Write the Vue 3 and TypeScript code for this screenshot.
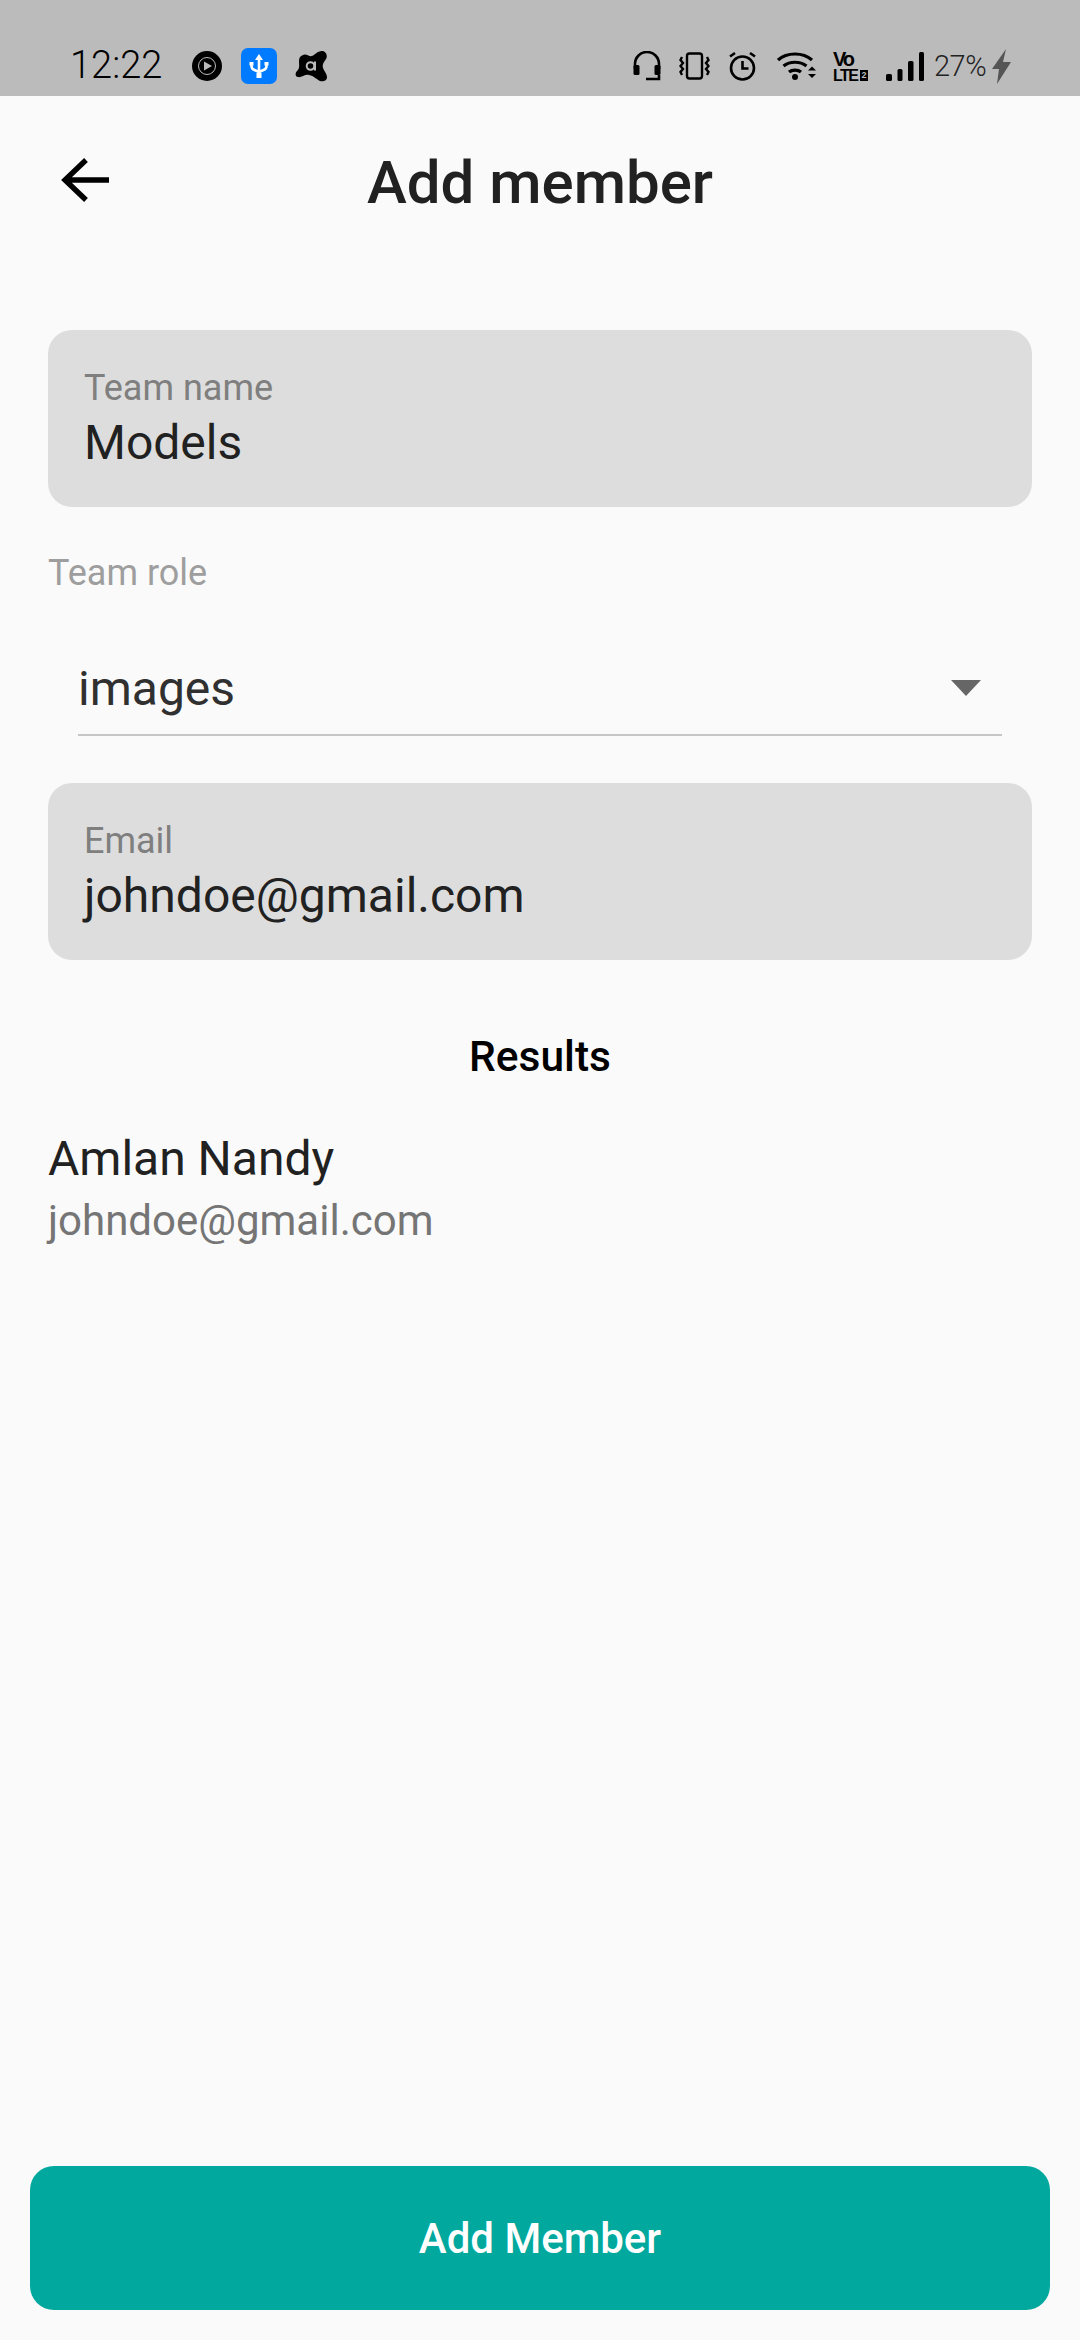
<script setup lang="ts">
const member = { name: 'Amlan Nandy', email: 'johndoe@gmail.com' }
</script>

<template>
  <div class="screen">
    <div class="status">
      <span class="time">12:22</span>
      <div class="left-icons">
        <svg width="30" height="30" viewBox="0 0 30 30">
          <circle cx="15" cy="15" r="15" fill="#000" />
          <circle cx="15" cy="15" r="8.500" fill="none" stroke="#bbb" stroke-width="1" />
          <path d="M12 10.500 L20 15 L12 19.500Z" fill="#bbb" />
        </svg>
        <svg width="36" height="36" viewBox="0 0 36 36">
          <rect width="36" height="36" rx="7" fill="#007aff" />
          <path d="M18 6l-4 6h8z" fill="#fff" />
          <rect x="15.500" y="25" width="5" height="5" fill="#fff" />
          <path d="M18 10v17M10.500 16v2q0 3 3 4l4.500 2M25.500 16v2q0 3-3 4l-4.500 2" fill="none" stroke="#fff" stroke-width="2.600" />
          <rect x="8.500" y="14" width="4" height="3.500" fill="#fff" />
          <rect x="23.500" y="14" width="4" height="3.500" fill="#fff" />
        </svg>
        <svg class="guard" width="32" height="32" viewBox="0 0 32 32">
          <path d="M8 5C11 3 14 7 17 6C20 5 22 1 27 1C31 1 33 6 31 9C29 12 27 14 28 18C29 21 32 24 32 27C32 31 28 32 25 31C21 29 19 26 14 25C10 24 6 28 3 27C0 27 0 23 2 21C5 18 4 15 4 11C4 8 5 6 8 5Z" fill="#000" />
          <circle cx="15.500" cy="16" r="3.800" fill="none" stroke="#bbb" stroke-width="2" />
          <path d="M20 11.500V20.500" stroke="#bbb" stroke-width="2" />
        </svg>
      </div>
      <div class="right-icons">
        <svg width="28" height="30" viewBox="0 0 28 30" fill="none" stroke="#000" stroke-width="2.600">
          <path d="M2 18V13a12 12 0 0 1 24 0v5" />
          <rect x="0.500" y="14" width="6" height="10" rx="1.500" fill="#000" stroke="none" />
          <rect x="21.500" y="14" width="6" height="10" rx="1.500" fill="#000" stroke="none" />
          <path d="M26 24v4H13" />
        </svg>
        <svg width="31" height="28" viewBox="0 0 31 28" fill="none" stroke="#000" stroke-width="2.400">
          <rect x="8" y="1.500" width="15" height="25" rx="2.500" />
          <path d="M3 5l-1.500 3 2.500 3-2.500 3 2.500 3-2.500 3 1.500 3M28 5l1.500 3-2.500 3 2.500 3-2.500 3 2.500 3-1.500 3" />
        </svg>
        <svg width="29" height="30" viewBox="0 0 29 30" fill="none" stroke="#000" stroke-width="2.600">
          <circle cx="14.500" cy="17" r="11.500" />
          <path d="M14.500 10v7.500h6M2 5.500l5-3.500M27 5.500l-5-3.500" />
        </svg>
        <svg class="wifi" width="39" height="28" viewBox="0 0 39 28" fill="none" stroke="#000" stroke-width="3.200">
          <path d="M1 8C10 0 26 0 35 8M6.500 14C13 9 23 9 29.500 14M12 20C15 17.500 21 17.500 24 20" />
          <circle cx="18" cy="25" r="3" fill="#000" stroke="none" />
          <path d="M31 18.500l4-4 4 4zM31 22l4 4 4-4z" fill="#000" stroke="none" />
        </svg>
        <div class="volte">
          <span class="vo">Vo</span>
          <span class="lte">LTE<b>2</b></span>
        </div>
        <svg width="38" height="29" viewBox="0 0 38 29" fill="#000">
          <rect x="0" y="22" width="6" height="7" rx="1.500" />
          <rect x="11.500" y="17" width="5" height="12" rx="1.500" />
          <rect x="22" y="9" width="5.500" height="20" rx="1.500" />
          <rect x="33" y="0" width="5" height="29" rx="1.500" />
        </svg>
        <span class="battery">27%</span>
        <svg class="bolt" width="19" height="35" viewBox="0 0 19 35">
          <path d="M14 0L0 20h7L5 35 19 13h-8z" fill="#555" />
        </svg>
      </div>
    </div>

    <header class="appbar">
      <svg class="back" width="50" height="48" viewBox="0 0 50 48" fill="none" stroke="#000" stroke-width="5.400">
        <path d="M50 24H5M27 4L6 24l21 20" />
      </svg>
      <h1>Add member</h1>
    </header>

    <main class="content">
      <div class="field">
        <label>Team name</label>
        <div class="value">Models</div>
      </div>

      <div class="role-label">Team role</div>
      <div class="dropdown">
        <span>images</span>
        <i class="caret"></i>
      </div>

      <div class="field">
        <label>Email</label>
        <div class="value">johndoe@gmail.com</div>
      </div>

      <h2>Results</h2>

      <div class="result">
        <div class="name">{{ member.name }}</div>
        <div class="mail">{{ member.email }}</div>
      </div>
    </main>

    <button class="cta">Add Member</button>
  </div>
</template>

<style scoped>
.screen {
  width: 1080px;
  height: 2340px;
  background: #fafafa;
  display: flex;
  flex-direction: column;
  font-family: Roboto, sans-serif;
  color: #212121;
  overflow: hidden;
}
.status {
  height: 96px;
  flex: none;
  box-sizing: border-box;
  background: #bbbbbb;
  display: flex;
  align-items: center;
  padding: 36px 69px 0 70px;
  color: #000;
}
.time {
  font-size: 38px;
  font-weight: 300;
  line-height: 40px;
  margin-top: -2px;
}
.left-icons {
  display: flex;
  align-items: center;
  gap: 19px;
  margin-left: 30px;
}
.guard {
  margin-left: -1px;
}
.right-icons {
  display: flex;
  align-items: center;
  gap: 18px;
  margin-left: auto;
}
.wifi {
  margin-left: 2px;
}
.volte {
  display: flex;
  flex-direction: column;
  gap: 4px;
  width: 35px;
  margin-left: -1px;
  font-family: "Liberation Sans", sans-serif;
  font-weight: 700;
  color: #000;
}
.vo {
  font-size: 20px;
  line-height: 14px;
  letter-spacing: -2px;
}
.lte {
  display: flex;
  align-items: center;
  font-size: 16px;
  line-height: 11px;
  letter-spacing: -1.5px;
}
.lte b {
  width: 10px;
  height: 11px;
  margin-left: 2.5px;
  background: #000;
  color: #bbb;
  font-size: 9px;
  line-height: 11px;
  letter-spacing: 0;
  text-align: center;
}
.battery {
  width: 51px;
  margin-left: -8px;
  font-size: 29px;
  font-weight: 300;
  letter-spacing: -0.5px;
  color: #222;
  white-space: nowrap;
}
.bolt {
  margin-left: -11px;
}
.appbar {
  height: 172px;
  flex: none;
  display: flex;
  align-items: center;
  justify-content: center;
  position: relative;
}
.back {
  position: absolute;
  left: 59px;
  top: 60px;
}
h1 {
  margin: 0;
  font-size: 60px;
  font-weight: 500;
  color: #212121;
}
.content {
  flex: 1;
  padding: 62px 48px 0;
}
.field {
  height: 177px;
  box-sizing: border-box;
  background: #dddddd;
  border-radius: 24px;
  padding: 37px 36px 0;
}
.field label {
  display: block;
  font-size: 36px;
  line-height: 42px;
  color: #7f7f7f;
}
.value {
  font-size: 48px;
  line-height: 58px;
  margin-top: 5px;
  color: #212121;
}
.role-label {
  font-size: 36px;
  line-height: 40px;
  color: #9e9e9e;
  margin-top: 46px;
}
.dropdown {
  margin: 49px 30px 47px;
  height: 94px;
  box-sizing: border-box;
  border-bottom: 2px solid #c6c6c6;
  display: flex;
  align-items: center;
  justify-content: space-between;
  padding-right: 21px;
  font-size: 48px;
  color: #303030;
}
.caret {
  width: 0;
  height: 0;
  border-left: 15.5px solid transparent;
  border-right: 15.5px solid transparent;
  border-top: 16px solid #666;
}
h2 {
  margin: 72px 0 0;
  text-align: center;
  font-size: 42.5px;
  line-height: 50px;
  font-weight: 500;
  color: #000;
}
.result {
  margin-top: 48px;
}
.name {
  font-size: 48px;
  line-height: 58px;
}
.mail {
  font-size: 42px;
  line-height: 50px;
  margin-top: 8px;
  color: #757575;
}
.cta {
  flex: none;
  margin: 0 30px 30px;
  height: 144px;
  border: 0;
  border-radius: 24px;
  background: #00a89e;
  color: #fff;
  font-family: inherit;
  font-size: 42px;
  font-weight: 500;
}
</style>
